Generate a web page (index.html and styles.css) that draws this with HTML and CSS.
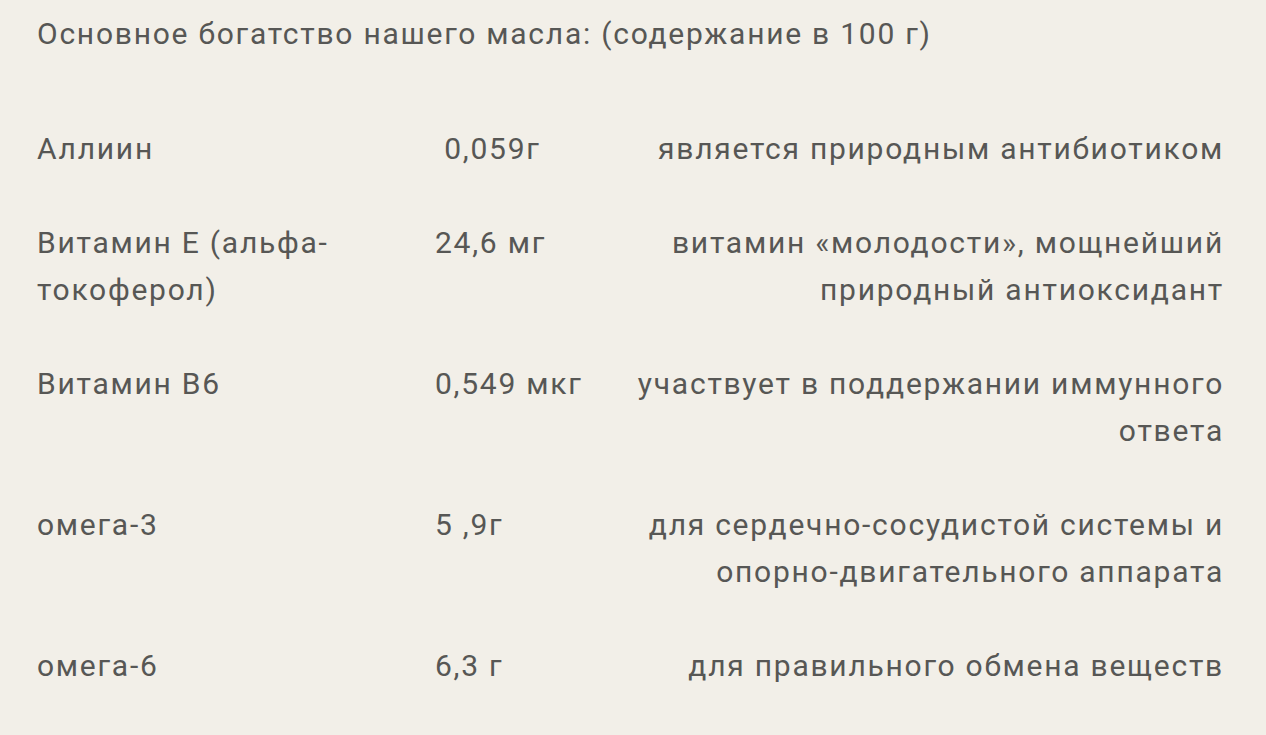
FILE: index.html
```html
<!DOCTYPE html>
<html lang="ru">
<head>
<meta charset="utf-8">
<link rel="stylesheet" href="styles.css">
</head>
<body>
<div class="page">
  <p class="intro">Основное богатство нашего масла: (содержание в 100 г)</p>
  <div class="table">
    <div class="row">
      <div class="name">Аллиин</div>
      <div class="amount">&nbsp;0,059г</div>
      <div class="desc">является природным антибиотиком</div>
    </div>
    <div class="row">
      <div class="name">Витамин Е (альфа-токоферол)</div>
      <div class="amount">24,6 мг</div>
      <div class="desc">витамин «молодости», мощнейший природный антиоксидант</div>
    </div>
    <div class="row">
      <div class="name">Витамин В6</div>
      <div class="amount">0,549 мкг</div>
      <div class="desc">участвует в поддержании иммунного ответа</div>
    </div>
    <div class="row">
      <div class="name">омега-3</div>
      <div class="amount">5 ,9г</div>
      <div class="desc">для сердечно-сосудистой системы и опорно-двигательного аппарата</div>
    </div>
    <div class="row">
      <div class="name">омега-6</div>
      <div class="amount">6,3 г</div>
      <div class="desc">для правильного обмена веществ</div>
    </div>
  </div>
</div>
</body>
</html>
```
FILE: styles.css
```css
html, body {
  margin: 0;
  padding: 0;
  background: #f2efe8;
}
.page {
  padding: 10px 42px 0 37px;
  font-family: Roboto, "Noto Sans", sans-serif;
  font-size: 30px;
  line-height: 47px;
  letter-spacing: 1.75px;
  color: #575755;
}
.intro {
  margin: 0 0 45px 0;
}
.row {
  display: grid;
  grid-template-columns: 398px 165px 1fr;
  padding: 23px 0 24px 0;
}
.name {
  padding-right: 60px;
}
.desc {
  text-align: right;
}
```
